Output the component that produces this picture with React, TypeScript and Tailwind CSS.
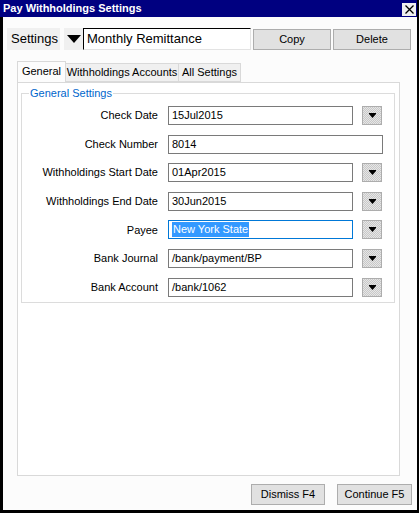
import React from "react"

const font = { fontFamily: '"Liberation Sans", Arial, sans-serif' }

function DropButton() {
  return (
    <div className="w-[20px] h-[19px] border border-[#adadad] bg-[repeating-conic-gradient(#c8c8c8_0_25%,#e6e6e6_0_50%)] bg-[length:2px_2px] flex items-center justify-center shrink-0">
      <svg width="7" height="5" viewBox="0 0 7 5">
        <path d="M0 0H7V1L3.5 5L0 1Z" fill="#000" />
      </svg>
    </div>
  )
}

interface FieldProps {
  label: string
  value: string
  dropdown?: boolean
  selected?: boolean
}

function Field({ label, value, dropdown = true, selected = false }: FieldProps) {
  return (
    <div className="flex items-center h-[19px]">
      <div className="w-[135px] text-right text-[11px] text-black shrink-0">{label}</div>
      <div
        className={
          "ml-[10px] h-[19px] flex items-center pl-[3px] text-[11px] text-black bg-white border " +
          (selected ? "border-[#0078d7] " : "border-[#7a7a7a] ") +
          (dropdown ? "w-[185px]" : "w-[215px]")
        }
      >
        {selected ? <span className="bg-[#3399ff] text-white px-[1px] leading-[15px]">{value}</span> : value}
      </div>
      {dropdown && (
        <div className="ml-[9px]">
          <DropButton />
        </div>
      )}
    </div>
  )
}

export default function App() {
  return (
    <div className="w-[419px] h-[513px] bg-black flex flex-col pr-[2px]" style={font}>
      {/* Title bar */}
      <div className="h-[17px] bg-[#000080] flex items-center justify-between pl-[3px] pr-[1px] shrink-0">
        <span className="text-white font-bold text-[11px] leading-none">Pay Withholdings Settings</span>
        <div className="w-[14px] h-[13px] bg-[#f0f0f0] flex items-center justify-center mt-[2px]">
          <svg width="9" height="9" viewBox="0 0 9 9">
            <path d="M0.5 0.5L8.5 8.5M8.5 0.5L0.5 8.5" stroke="#000" strokeWidth="1.3" />
          </svg>
        </div>
      </div>

      {/* Body */}
      <div className="flex-1 bg-[#fcfcfc] ml-[3px] mb-[3px] flex flex-col">
        {/* Settings row */}
        <div className="flex items-center mt-[11px] pl-[4px] h-[22px]">
          <div className="w-[53px] h-[22px] bg-[#f0f0f0] flex items-center pl-[4px] text-[13px] text-black">Settings</div>
          <div className="ml-[4px] w-[19px] h-[22px] bg-[#f0f0f0] flex items-center justify-center">
            <svg width="14" height="8" viewBox="0 0 14 8">
              <path d="M0 0H14L7 8Z" fill="#000" />
            </svg>
          </div>
          <div className="w-[168px] h-[22px] bg-white border-t border-l border-t-black border-l-black border-r border-b border-r-[#e3e3e3] border-b-[#e3e3e3] flex items-center pl-[3px] text-[13px] text-black">
            Monthly Remittance
          </div>
          <button className="ml-[2px] w-[78px] h-[21px] bg-[#e1e1e1] border border-[#adadad] text-[11px] text-black">Copy</button>
          <button className="ml-[2px] w-[78px] h-[21px] bg-[#e1e1e1] border border-[#adadad] text-[11px] text-black">Delete</button>
        </div>

        {/* Tabs */}
        <div className="flex items-end mt-[11px] ml-[14px] h-[21px] relative z-10">
          <div className="w-[49px] h-[21px] bg-[#fcfcfc] border border-[#d9d9d9] border-b-0 flex items-center justify-center text-[11px] text-black pb-[1px]">
            General
          </div>
          <div className="w-[113px] h-[19px] bg-[#f0f0f0] border border-[#d9d9d9] border-l-0 flex items-center justify-center text-[11px] text-black">
            Withholdings Accounts
          </div>
          <div className="w-[62px] h-[19px] bg-[#f0f0f0] border border-[#d9d9d9] border-l-0 flex items-center justify-center text-[11px] text-black">
            All Settings
          </div>
        </div>

        {/* Panel */}
        <div className="flex-1 ml-[14px] mr-[17px] border border-[#d9d9d9] bg-white px-[3px] pt-[4px] pr-[4px]">
          <fieldset className="border border-[#dcdcdc] px-[1px] pb-[5px]">
            <legend className="ml-[6px] px-[1px] text-[11px] leading-[13px] text-[#0066cc]">General Settings</legend>
            <div className="flex flex-col gap-[9.6px] pt-[6px]">
              <Field label="Check Date" value="15Jul2015" />
              <Field label="Check Number" value="8014" dropdown={false} />
              <Field label="Withholdings Start Date" value="01Apr2015" />
              <Field label="Withholdings End Date" value="30Jun2015" />
              <Field label="Payee" value="New York State" selected />
              <Field label="Bank Journal" value="/bank/payment/BP" />
              <Field label="Bank Account" value="/bank/1062" />
            </div>
          </fieldset>
        </div>

        {/* Footer buttons */}
        <div className="flex justify-end gap-[12px] mt-[8px] mb-[5px] pr-[5px]">
          <button className="w-[74px] h-[21px] bg-[#e1e1e1] border border-[#adadad] text-[11px] text-black">Dismiss F4</button>
          <button className="w-[75px] h-[21px] bg-[#e1e1e1] border border-[#adadad] text-[11px] text-black">Continue F5</button>
        </div>
      </div>
    </div>
  )
}
